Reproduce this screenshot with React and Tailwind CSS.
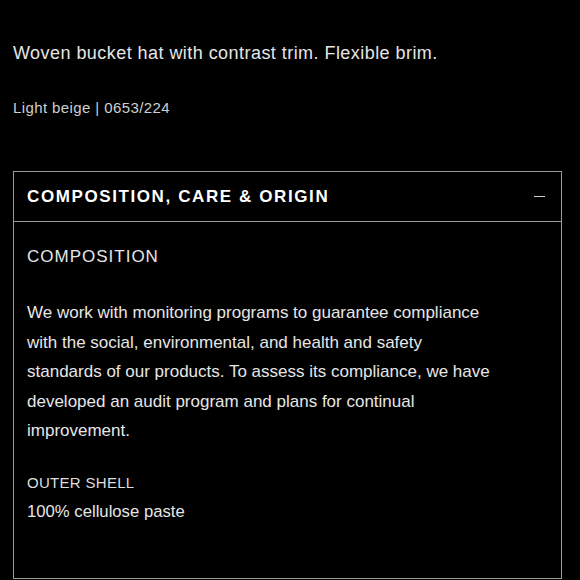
import React from 'react';

const App = () => {
  return (
    <div
      className="w-[580px] h-[580px] overflow-hidden bg-black text-[#e8e8e8] pl-[13px] pr-[18px]"
      style={{ fontFamily: '"Liberation Sans", Arial, sans-serif' }}
    >
      <p className="pt-[40px] text-[18px] leading-[26px] tracking-[0.45px] text-[#e6e6e6]">
        Woven bucket hat with contrast trim. Flexible brim.
      </p>
      <p className="mt-[32px] text-[15px] leading-[20px] tracking-[0.4px] text-[#cfcfcf]">
        Light beige | 0653/224
      </p>

      <div className="mt-[53px] border border-[#9a9a9a]">
        <div className="h-[50px] flex items-center justify-between pl-[13px] pr-[16px] border-b border-[#9a9a9a]">
          <h2 className="text-[17px] font-bold tracking-[1.6px] text-white">
            COMPOSITION, CARE &amp; ORIGIN
          </h2>
          <span className="block w-[11px] h-px bg-[#d0d0d0]" />
        </div>
        <div className="pl-[13px] pt-[22px] pb-[53px]">
          <p className="text-[17px] leading-[26px] tracking-[1px] text-[#e6e6e6]">COMPOSITION</p>
          <p className="mt-[28px] w-[472px] text-[17px] leading-[29.5px] text-[#e6e6e6]">
            We work with monitoring programs to guarantee compliance with the social,
            environmental, and health and safety standards of our products. To assess its
            compliance, we have developed an audit program and plans for continual improvement.
          </p>
          <p className="mt-[25px] text-[15px] leading-[24px] tracking-[0.3px] text-[#dedede]">OUTER SHELL</p>
          <p className="mt-[4px] text-[16.7px] leading-[26px] text-[#e6e6e6]">100% cellulose paste</p>
        </div>
      </div>
    </div>
  );
};

export default App;
